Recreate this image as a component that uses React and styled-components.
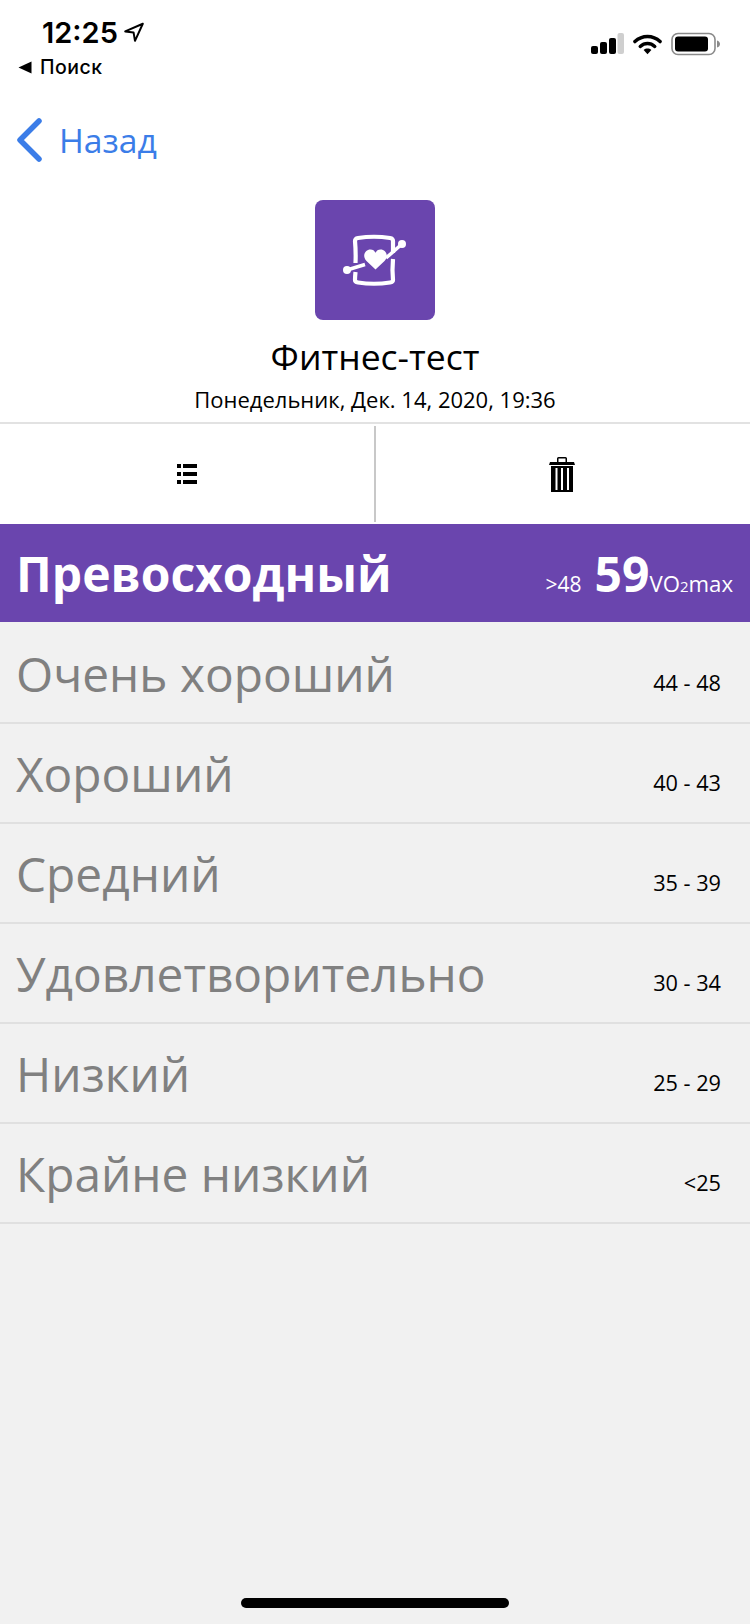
import styled, { createGlobalStyle } from 'styled-components';

const GlobalStyle = createGlobalStyle`
    html, body {
        margin: 0;
        padding: 0;
        background: #f1f1f1;
    }
    * {
        box-sizing: border-box;
    }
`;

const LEVELS = [
    { name: 'Очень хороший', range: '44 - 48' },
    { name: 'Хороший', range: '40 - 43' },
    { name: 'Средний', range: '35 - 39' },
    { name: 'Удовлетворительно', range: '30 - 34' },
    { name: 'Низкий', range: '25 - 29' },
    { name: 'Крайне низкий', range: '<25' },
];

export default function App() {
    return (
        <>
            <GlobalStyle />
            <Page>
                <Top>
                    <StatusBar>
                        <StatusLeft>
                            <Clock>
                                12:25
                                <svg width="22" height="22" viewBox="0 0 20 20">
                                    <path d="M18 2.5 2 9.5l7.6.9 1.3 7.6z" fill="none" stroke="#000" strokeWidth="1.8" strokeLinejoin="round" />
                                </svg>
                            </Clock>
                            <BackApp>
                                <svg width="14" height="13" viewBox="0 0 14 13">
                                    <path d="M0.5 6.5 13.500 .5v12z" fill="#000" />
                                </svg>
                                Поиск
                            </BackApp>
                        </StatusLeft>
                        <StatusRight>
                            <svg width="33" height="22" viewBox="0 0 33 22">
                                <rect x="0" y="13" width="7" height="8" rx="2" fill="#000" />
                                <rect x="9" y="9" width="7" height="12" rx="2" fill="#000" />
                                <rect x="18" y="5" width="7" height="16" rx="2" fill="#000" />
                                <rect x="26.500" y="0" width="6.500" height="21" rx="2" fill="#cfcfcf" />
                            </svg>
                            <svg width="29" height="22" viewBox="0 0 30 22">
                                <path d="M2 8.500C9.500 1.500 20.500 1.500 28 8.500" fill="none" stroke="#000" strokeWidth="3.6" strokeLinecap="round" />
                                <path d="M7.500 13.500c4.400-4 10.600-4 15 0" fill="none" stroke="#000" strokeWidth="3.6" strokeLinecap="round" />
                                <path d="M11 17.200c2.400-2 5.600-2 8 0L15 21.500z" fill="#000" />
                            </svg>
                            <svg width="50" height="24" viewBox="0 0 50 24">
                                <rect x="1" y="1.500" width="43" height="21" rx="6" fill="none" stroke="#8a8a8a" strokeWidth="1.600" />
                                <rect x="4" y="4.500" width="33" height="15" rx="3" fill="#000" />
                                <path d="M46 8.500c2 .5 3 2 3 3.500s-1 3-3 3.500z" fill="#8a8a8a" />
                            </svg>
                        </StatusRight>
                    </StatusBar>
                    <NavBar>
                        <svg width="28" height="44" viewBox="0 0 28 44">
                            <path d="M23 3 4 22l19 19" fill="none" stroke="#3b7de8" strokeWidth="5.500" strokeLinecap="round" strokeLinejoin="round" />
                        </svg>
                        <BackLabel>Назад</BackLabel>
                    </NavBar>
                    <Header>
                        <AppIcon>
                            <svg width="70" height="60" viewBox="0 0 70 60">
                                <g fill="none" stroke="#fff" strokeWidth="4.200" strokeLinecap="butt">
                                    <path d="M53 23V11Q53 8.500 50 8 34 5.500 18 8 15 8.500 15 11 16 22 15.500 33" />
                                    <path d="M15.500 42Q15 47 15 50 15 52 18 52.500 34 55 50 52.500 53 52 53 50 52 40 53 29" />
                                    <path d="M7 40 25 34.500M46 28 62 14" strokeWidth="3.500" />
                                </g>
                                <circle cx="7" cy="40" r="4" fill="#fff" />
                                <circle cx="62" cy="14" r="4" fill="#fff" />
                                <path d="M35.500 39.500 26.500 31C21.500 25.500 25.500 19.500 30.500 19.500 32.800 19.500 34.500 20.700 35.500 22.800 36.500 20.700 38.200 19.500 40.500 19.500 45.500 19.500 49.500 25.500 44.500 31Z" fill="#fff" />
                            </svg>
                        </AppIcon>
                        <Title>Фитнес-тест</Title>
                        <DateText>Понедельник, Дек. 14, 2020, 19:36</DateText>
                    </Header>
                    <Actions>
                        <ActionButton>
                            <svg width="20" height="20" viewBox="0 0 20 20">
                                <path d="M0 0h4v4H0zM6 0h14v4H6zM0 8h4v4H0zM6 8h14v4H6zM0 16h4v4H0zM6 16h14v4H6z" fill="#000" />
                            </svg>
                        </ActionButton>
                        <ActionButton>
                            <svg width="26" height="35" viewBox="0 0 26 35">
                                <path d="M0 8 1 5H8V1.500Q8 0 9.500 0H16.500Q18 0 18 1.500V5H25L26 8ZM9.500 5H16.500V1.500H9.500Z" fill="#000" fillRule="evenodd" />
                                <path d="M2 9H24V35H2ZM6.500 11V33H8.500V11ZM12 11V33H14V11ZM18 11V33H20V11Z" fill="#000" fillRule="evenodd" />
                            </svg>
                        </ActionButton>
                    </Actions>
                </Top>
                <Banner>
                    <BannerName>Превосходный</BannerName>
                    <BannerScore>
                        <BannerRange>&gt;48</BannerRange>
                        <BannerValue>59</BannerValue>
                        <BannerUnit>VO<small>2</small>max</BannerUnit>
                    </BannerScore>
                </Banner>
                {LEVELS.map(level => (
                    <Row key={level.name}>
                        <RowName>{level.name}</RowName>
                        <RowRange>{level.range}</RowRange>
                    </Row>
                ))}
                <HomeBar />
            </Page>
        </>
    );
}

const Page = styled.div`
    position: relative;
    width: 750px;
    height: 1624px;
    overflow: hidden;
    background: #f1f1f1;
    font-family: "Open Sans", sans-serif;
`;

const Top = styled.div`
    background: #ffffff;
`;

const StatusBar = styled.div`
    display: flex;
    justify-content: space-between;
    height: 88px;
`;

const StatusLeft = styled.div`
    display: flex;
    flex-direction: column;
    padding: 15px 0 0 18px;
`;

const Clock = styled.div`
    display: flex;
    align-items: center;
    gap: 5px;
    padding-left: 24px;
    height: 34px;
    font-family: Inter, sans-serif;
    font-size: 29px;
    font-weight: 600;
    color: #000;
`;

const BackApp = styled.div`
    display: flex;
    align-items: center;
    gap: 8px;
    margin-top: 7px;
    height: 22px;
    font-family: Inter, sans-serif;
    font-size: 19.5px;
    font-weight: 500;
    letter-spacing: 0.5px;
    color: #000;
`;

const StatusRight = styled.div`
    display: flex;
    align-items: center;
    gap: 9px;
    height: 88px;
    padding-right: 29px;
`;

const NavBar = styled.div`
    display: flex;
    align-items: center;
    gap: 15px;
    height: 103px;
    padding-left: 16px;
`;

const BackLabel = styled.span`
    font-size: 33.7px;
    color: #3b7de8;
`;

const Header = styled.div`
    display: flex;
    flex-direction: column;
    align-items: center;
    padding-top: 9px;
    border-bottom: 2px solid #e2e2e2;
`;

const AppIcon = styled.div`
    display: flex;
    align-items: center;
    justify-content: center;
    width: 120px;
    height: 120px;
    border-radius: 8px;
    background: #6a45ae;
`;

const Title = styled.div`
    margin-top: 13px;
    height: 46px;
    line-height: 46px;
    font-size: 35.5px;
    color: #000;
`;

const DateText = styled.div`
    margin-top: 8px;
    height: 35px;
    line-height: 25px;
    font-size: 22px;
    color: #000;
`;

const Actions = styled.div`
    display: grid;
    grid-template-columns: 374px 1fr;
    height: 100px;
    padding: 2px 0;
`;

const ActionButton = styled.div`
    display: flex;
    align-items: center;
    justify-content: center;
    & + & {
        border-left: 2px solid #c8c8c8;
        padding-right: 2px;
    }
`;

const Banner = styled.div`
    display: flex;
    align-items: center;
    justify-content: space-between;
    height: 98px;
    padding: 0 17px 0 16px;
    margin-bottom: 2px;
    background: #6a45ae;
    color: #fff;
`;

const BannerName = styled.div`
    font-size: 48px;
    font-weight: 700;
`;

const BannerScore = styled.div`
    display: flex;
    align-items: baseline;
`;

const BannerRange = styled.span`
    margin-right: 13px;
    font-size: 21px;
`;

const BannerValue = styled.span`
    font-size: 48px;
    font-weight: 700;
`;

const BannerUnit = styled.span`
    font-size: 22.2px;
    small {
        font-size: 15px;
    }
`;

const Row = styled.div`
    display: flex;
    align-items: center;
    justify-content: space-between;
    height: 100px;
    padding: 0 29px 0 16px;
    border-bottom: 2px solid #e0e0e0;
`;

const RowName = styled.div`
    font-size: 47.8px;
    color: #808080;
`;

const RowRange = styled.div`
    padding-top: 18px;
    font-size: 21.7px;
    color: #000;
`;

const HomeBar = styled.div`
    position: absolute;
    left: 241px;
    bottom: 16px;
    width: 268px;
    height: 10px;
    border-radius: 5px;
    background: #000;
`;
